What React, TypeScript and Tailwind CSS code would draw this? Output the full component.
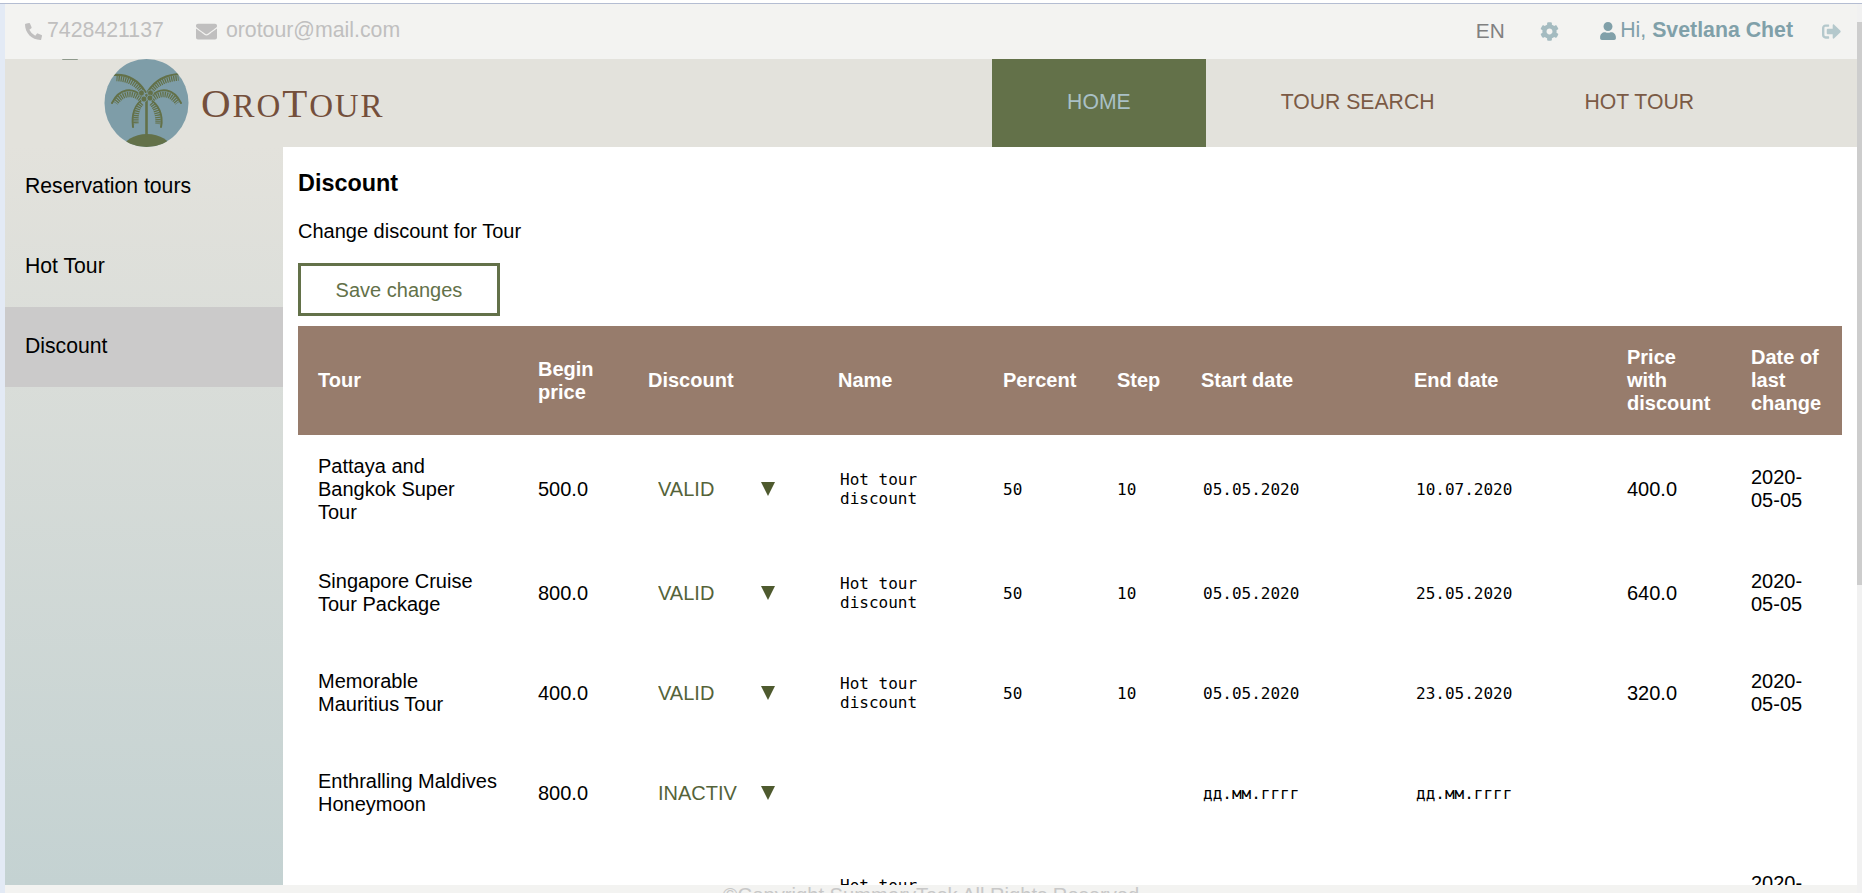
import React from 'react';
import { FaCog, FaEnvelope, FaPhoneAlt, FaSignOutAlt, FaUser } from 'react-icons/fa';

const COLUMNS = [
  { label: 'Tour', width: 'w-[220px]' },
  { label: 'Begin price', width: 'w-[110px]' },
  { label: 'Discount', width: 'w-[190px]' },
  { label: 'Name', width: 'w-[165px]' },
  { label: 'Percent', width: 'w-[114px]' },
  { label: 'Step', width: 'w-[84px]' },
  { label: 'Start date', width: 'w-[213px]' },
  { label: 'End date', width: 'w-[213px]' },
  { label: 'Price with discount', width: 'w-[124px]' },
  { label: 'Date of last change', width: 'w-[111px]' },
];

const ROWS = [
  { tour: 'Pattaya and Bangkok Super Tour', begin: '500.0', status: 'VALID', name: 'Hot tour discount', percent: '50', step: '10', start: '05.05.2020', end: '10.07.2020', price: '400.0', changed: '2020-05-05', height: 'h-[108px]' },
  { tour: 'Singapore Cruise Tour Package', begin: '800.0', status: 'VALID', name: 'Hot tour discount', percent: '50', step: '10', start: '05.05.2020', end: '25.05.2020', price: '640.0', changed: '2020-05-05', height: 'h-[100px]' },
  { tour: 'Memorable Mauritius Tour', begin: '400.0', status: 'VALID', name: 'Hot tour discount', percent: '50', step: '10', start: '05.05.2020', end: '23.05.2020', price: '320.0', changed: '2020-05-05', height: 'h-[100px]' },
  { tour: 'Enthralling Maldives Honeymoon', begin: '800.0', status: 'INACTIVE', name: '', percent: '', step: '', start: 'дд.мм.гггг', end: 'дд.мм.гггг', price: '', changed: '', height: 'h-[100px]' },
];

const FRONDS = [
  { spine: 'M41 33C33 20 22 15 9 16', leaf: 'M39 34C32 24 23 20 12 19.5' },
  { spine: 'M43 33C51 20 62 15 77.5 15', leaf: 'M45 34C52 24 62 20 74 19' },
  { spine: 'M37 37C28 28 15 29 7.5 44', leaf: 'M36 40C28 33 18 34 11 44' },
  { spine: 'M47 37C56 28 69 29 76.5 44', leaf: 'M48 40C56 33 66 34 73 44' },
  { spine: 'M39 40C30 45 27 56 28.5 68', leaf: 'M37 44C32 49 31 57 31.5 65' },
  { spine: 'M45 40C54 45 59 56 56.5 68', leaf: 'M47 44C52 49 54 57 53.5 65' },
];

function PalmLogo() {
  return (
    <svg viewBox="0 0 84 88" className="w-[85px] h-[88px] shrink-0" aria-hidden="true">
      <defs>
        <clipPath id="logo-circle">
          <ellipse cx="42" cy="44" rx="42" ry="44" />
        </clipPath>
      </defs>
      <ellipse cx="42" cy="44" rx="42" ry="44" fill="#7e9da8" />
      <g clipPath="url(#logo-circle)" fill="none" stroke="#637149" strokeLinecap="round">
        <ellipse cx="42.5" cy="90" rx="24" ry="15" fill="#637149" stroke="none" />
        <path d="M42 36V76" strokeWidth="2.6" />
        {FRONDS.map((frond, i) => (
          <g key={i}>
            <path d={frond.spine} strokeWidth="2" />
            <path d={frond.leaf} strokeWidth="5.5" strokeDasharray="1.3 0.9" strokeLinecap="butt" />
          </g>
        ))}
        <g fill="#637149" stroke="#7e9da8" strokeWidth="0.7">
          <circle cx="37" cy="34" r="3" />
          <circle cx="46" cy="34" r="3" />
          <circle cx="39.5" cy="40" r="3" />
          <circle cx="45.5" cy="39" r="3" />
        </g>
      </g>
    </svg>
  );
}

function Triangle() {
  return (
    <svg viewBox="0 0 14 14" className="w-[14px] h-[14px]" aria-hidden="true">
      <polygon points="0,0 14,0 7,14" fill="#4e5a2e" />
    </svg>
  );
}

export default function App() {
  return (
    <div className="relative h-[893px] w-full overflow-hidden bg-white pt-[3px] font-['Liberation_Sans',Arial,sans-serif] text-[20.8px]">
      <div className="h-px bg-[#b4bdd2]"></div>

      <div className="flex h-[889px]">
        <div className="w-[5px] shrink-0 bg-[#e3eaf5]"></div>

        <div className="flex min-w-0 flex-1 flex-col">
          <div className="flex h-[55px] shrink-0 items-center justify-between bg-[#f3f3f1] pb-px pl-5 pr-4">
            <div className="flex items-center text-[21.3px] text-[#c0bfbf]">
              <FaPhoneAlt className="mr-[5px] h-[17px] w-[17px]" />
              <span>7428421137</span>
              <FaEnvelope className="ml-[32px] mr-[9px] h-[21px] w-[21px]" />
              <span>orotour@mail.com</span>
            </div>
            <div className="flex items-center">
              <span className="text-[#808080]">EN</span>
              <FaCog className="ml-[35px] h-[19px] w-[19px] text-[#a4bbc0]" />
              <FaUser className="ml-[41px] mr-[4.5px] h-[18px] w-[16px] text-[#80a0a9]" />
              <span className="text-[21.3px] text-[#80a0a9]">
                Hi, <b className="font-bold">Svetlana Chet</b>
              </span>
              <FaSignOutAlt className="ml-[29px] h-[19px] w-[19px] text-[#b4c8cc]" />
            </div>
          </div>

          <nav className="relative flex h-[88px] shrink-0 items-stretch justify-between bg-[#e3e2dc] pr-[88px] text-[21.2px]">
            <span className="absolute left-[57px] top-0 h-px w-4 rounded-b-full bg-[#8f9a8c]"></span>
            <div className="flex items-center pl-[99px]">
              <PalmLogo />
              <span className="ml-[12px] whitespace-nowrap font-['Liberation_Serif',serif] text-[41px] leading-none tracking-[1.9px] text-[#744f3b]">
                O<span className="text-[33px]">RO</span>T<span className="text-[33px]">OUR</span>
              </span>
            </div>
            <div className="flex items-stretch">
              <a className="flex items-center bg-[#637149] px-[75px] pb-0.5 text-[#a9c0c6]">HOME</a>
              <a className="flex items-center px-[75px] pb-0.5 text-[#7b5a45]">TOUR SEARCH</a>
              <a className="flex items-center px-[75px] pb-0.5 text-[#7b5a45]">HOT TOUR</a>
            </div>
          </nav>

          <div className="flex min-h-0 flex-1">
            <aside className="w-[278px] shrink-0 bg-linear-to-b from-[#e3e2dc] to-[#c4d2d2] text-[21.2px] text-black">
              <div className="flex h-20 items-center pb-0.5 pl-5">Reservation tours</div>
              <div className="flex h-20 items-center pb-0.5 pl-5">Hot Tour</div>
              <div className="flex h-20 items-center bg-[#cbcaca] pb-0.5 pl-5">Discount</div>
            </aside>

            <main className="min-w-0 flex-1 overflow-hidden bg-white px-[15px] text-black">
              <h3 className="mt-[23px] text-[23.4px] font-bold leading-[27px]">Discount</h3>
              <p className="mt-[22px] text-[20px] leading-6">Change discount for Tour</p>
              <button className="mt-[20px] block h-[53px] w-[202px] border-[3px] border-[#637149] text-center text-[20px] text-[#637149]">
                Save changes
              </button>

              <table className="mt-[10px] w-[1544px] table-fixed border-collapse text-[20px] leading-[23px]">
                <thead>
                  <tr className="h-[109px] bg-[#977c6c] text-left text-white">
                    {COLUMNS.map((col) => (
                      <th key={col.label} className={`${col.width} pl-5 pr-[17px] font-bold`}>
                        {col.label}
                      </th>
                    ))}
                  </tr>
                </thead>
                <tbody>
                  {ROWS.map((row) => (
                    <tr key={row.tour} className={row.height}>
                      <td className="pl-5 pr-[20.5px]">{row.tour}</td>
                      <td className="pl-5">{row.begin}</td>
                      <td className="pl-[30px]">
                        <div className="flex items-center text-[#556339]">
                          <span className="w-[80px] overflow-hidden whitespace-nowrap">{row.status}</span>
                          <span className="ml-[23px]">
                            <Triangle />
                          </span>
                        </div>
                      </td>
                      <td className="pl-[22px] font-['DejaVu_Sans_Mono',monospace] text-[16px] leading-[19px]">
                        <div className="w-[120px]">{row.name}</div>
                      </td>
                      <td className="pl-5 font-['DejaVu_Sans_Mono',monospace] text-[16px]">{row.percent}</td>
                      <td className="pl-5 font-['DejaVu_Sans_Mono',monospace] text-[16px]">{row.step}</td>
                      <td className="pl-[22px] font-['DejaVu_Sans_Mono',monospace] text-[16px]">{row.start}</td>
                      <td className="pl-[22px] font-['DejaVu_Sans_Mono',monospace] text-[16px]">{row.end}</td>
                      <td className="pl-5">{row.price}</td>
                      <td className="pl-5 pr-[15px]">{row.changed}</td>
                    </tr>
                  ))}
                  <tr className="h-[103px]">
                    <td colSpan={3}></td>
                    <td className="pl-[22px] font-['DejaVu_Sans_Mono',monospace] text-[16px] leading-[19px]">
                      <div className="w-[120px]">Hot tour discount</div>
                    </td>
                    <td colSpan={5}></td>
                    <td className="pl-5 pr-[15px]">2020-05-05</td>
                  </tr>
                </tbody>
              </table>
            </main>
          </div>

          <footer className="h-2 shrink-0 overflow-hidden bg-[#f3f3f1] text-center text-[20.2px] leading-[20px] text-[#c8c8c8]">
            ©Copyright SummaryTask All Rights Reserved
          </footer>
        </div>

        <div className="w-[5px] shrink-0 bg-[#f1f1f1] pt-[18px]">
          <div className="h-[563px] bg-[#cdcdcd]"></div>
        </div>
      </div>
    </div>
  );
}
